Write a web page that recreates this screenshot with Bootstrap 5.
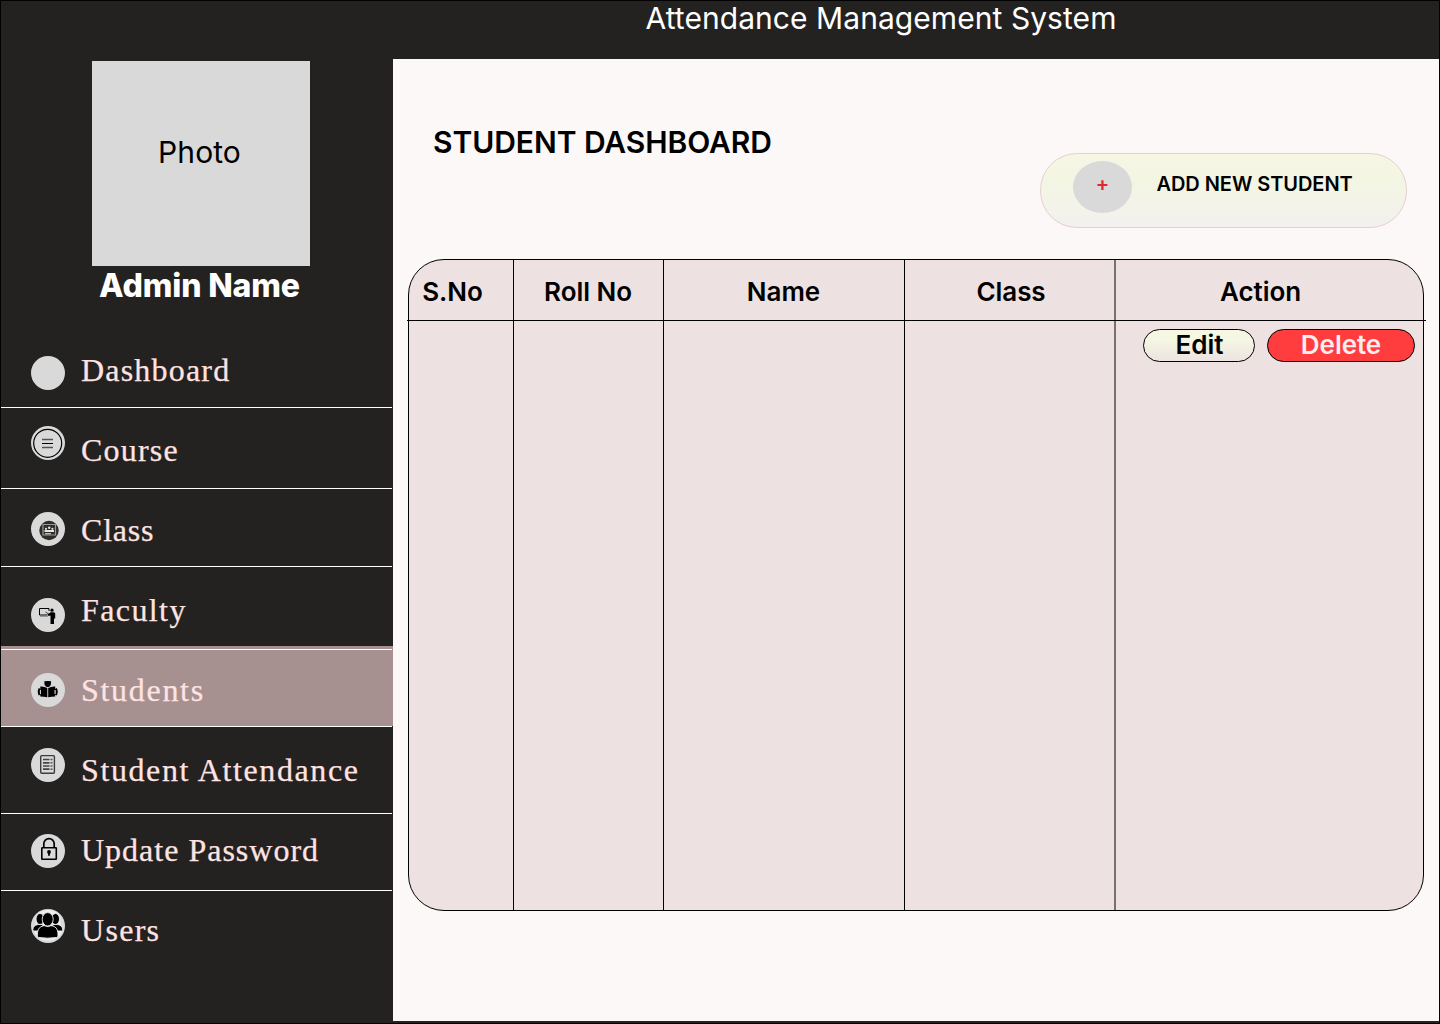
<!DOCTYPE html>
<html lang="en">
<head>
<meta charset="utf-8">
<meta name="viewport" content="width=device-width, initial-scale=1">
<title>Attendance Management System</title>
<link href="https://cdn.jsdelivr.net/npm/bootstrap@5.3.0/dist/css/bootstrap.min.css" rel="stylesheet">
<style>
  body { font-family: Inter, "Liberation Sans", sans-serif; color: #000; line-height: 1.2; }
  .app-frame { width: 1440px; height: 1024px; background: #232220; border: 1px solid #000; }
  .app-side { width: 392px; padding-top: 60px; }
  .app-photo { width: 218px; height: 205px; margin-left: 91px; background: #d9d9d9; font-size: 30px; padding: 0 3px 24px 0; letter-spacing: .1px; }
  .app-admin { width: 218px; margin-left: 90px; font-size: 32px; font-weight: 800; line-height: 40px; color: #fff; letter-spacing: -.15px; padding-right: 1px; }
  .side-menu { margin-top: 21px; }
  .side-link { height: var(--h); padding-left: 30px; gap: 16px; color: #ffe3e3; text-decoration: none; position: relative;
    font-family: "Liberation Serif", serif; font-size: 32px; line-height: 40px; letter-spacing: var(--ls, 1.2px); -webkit-text-stroke: .25px #ffe3e3; }
  .side-link::after { content: ""; position: absolute; left: 0; bottom: 0; width: 391px; height: 1px; background: #fff; }
  .side-link.no-line::after { display: none; }
  .side-link.current { background: linear-gradient(#a69190 80px, transparent 80px); }
  .side-link.current::before { content: ""; position: absolute; left: 0; top: 3px; width: 391px; height: 1px; background: #fff; }
  .side-link svg { width: 34px; height: 34px; margin-top: var(--i); flex: none; }
  .side-link span { margin-top: var(--t); white-space: nowrap; }
  .app-title { height: 58px; padding-right: 71px; font-size: 30px; font-weight: 400; line-height: 34px; letter-spacing: .06px; color: #fff; }
  .app-main { height: 962px; background: #fcf8f7; padding: 67px 16px 0 15px; }
  .page-head { height: 133px; padding: 0 17px 0 25px; }
  .page-title { font-size: 30px; font-weight: 600; line-height: 32px; letter-spacing: -.06px; margin: 0; }
  .add-btn { width: 367px; height: 75px; margin-top: 27px; padding: 0 0 7px 32px; border: 1px solid #e6cfcf; border-radius: 37px;
    background: linear-gradient(#f5f7e3, #f3f5e4 45%, #f3f1ed 90%); font-size: 20px; font-weight: 600; gap: 25px; color: #000; }
  .add-plus { width: 59px; height: 52px; border-radius: 50%; background: #d9d9d9; color: #dc2a2f; padding-bottom: 6px; }
  .add-label { padding-bottom: 7px; letter-spacing: -.06px; margin-left: -.5px; }
  .grid-box { width: 1016px; height: 652px; border: 1px solid #000; border-radius: 36px; background: #ede1e1; position: relative; }
  .grid-box::after { content: ""; position: absolute; left: -2px; top: 60px; width: 1019px; height: 1px; background: #000; }
  .grid-col { border-right: 1px solid #000; }
  .grid-col:last-child { border-right: 0; }
  .grid-head { height: 60px; padding-top: 4px; font-size: 26px; font-weight: 600; letter-spacing: -.05px; }
  .c-no { width: 105px; } .c-roll { width: 150px; } .c-name { width: 241px; }
  .c-class { width: 211px; border-right: 2px solid #777172; } .c-act { width: 307px; }
  .c-no .grid-head { padding-right: 17px; } .c-act .grid-head { padding-right: 18px; }
  .c-roll .grid-head, .c-name .grid-head { padding-right: 1px; } .c-class .grid-head { padding-left: 3px; }
  .row-btns { padding: 9px 0 0 27px; gap: 12px; }
  .pill-btn { height: 33px; border: 1px solid #000; border-radius: 17px; padding: 0; font-size: 26px; font-weight: 600; line-height: 28px; padding-bottom: 2px; letter-spacing: -.05px; }
  .edit-btn { width: 112px; background: linear-gradient(#f5f7e3 30%, #ede3e1); color: #000; padding-left: 1px; }
  .del-btn { width: 148px; background: #ff3d3f; color: #fceeee; }
</style>
<script src="https://cdn.jsdelivr.net/npm/bootstrap@5.3.0/dist/js/bootstrap.bundle.min.js"></script>
</head>
<body>
<div class="app-frame d-flex overflow-hidden">
  <aside class="app-side flex-shrink-0">
    <div class="app-photo d-flex align-items-center justify-content-center">Photo</div>
    <div class="app-admin text-center text-nowrap">Admin Name</div>
    <nav class="side-menu d-flex flex-column">
      <a href="#" class="side-link d-flex align-items-start" style="--h:81px;--i:29px;--t:23px;--ls:1.2px">
        <svg viewBox="0 0 34 34"><circle cx="17" cy="17" r="17" fill="#d9d9d9"/></svg><span>Dashboard</span></a>
      <a href="#" class="side-link d-flex align-items-start" style="--h:81px;--i:18px;--t:22px;--ls:1.2px">
        <svg viewBox="0 0 34 34"><circle cx="17" cy="17" r="17" fill="#d9d9d9"/><circle cx="16.700" cy="17.300" r="14" fill="none" stroke="#000" stroke-width="1.200"/><path d="M11 13.500h11M11 21.500h11" stroke="#555" stroke-width="1.300"/><path d="M11 17.500h11" stroke="#000"/></svg><span>Course</span></a>
      <a href="#" class="side-link d-flex align-items-start" style="--h:78px;--i:23px;--t:21px;--ls:.8px">
        <svg viewBox="0 0 34 34"><circle cx="17" cy="17" r="17" fill="#d9d9d9"/><circle cx="18" cy="18.500" r="9.700" fill="#2f2d29"/><path d="M12 12.500h12.500v10.500H12z" fill="none" stroke="#9b9a96" stroke-width="1.200"/><g fill="#e6e4e0"><circle cx="15" cy="16.800" r="1.100"/><circle cx="18.200" cy="15.800" r="1.200"/><circle cx="21.400" cy="16.800" r="1.100"/><path d="M13.500 18h9.500v2h-9.500zM14 21.300h6v1h-6z"/></g></svg><span>Class</span></a>
      <a href="#" class="side-link no-line d-flex align-items-start" style="--h:79px;--i:31px;--t:23px;--ls:1.4px">
        <svg viewBox="0 0 34 34"><circle cx="17" cy="17" r="17" fill="#d9d9d9"/><path d="M18 13V10.500H8.500v6.500h8" fill="none" stroke="#000"/><path d="M9 18.500h8" stroke="#888" stroke-width=".8"/><path d="M14.500 14l4 2.500" stroke="#333" stroke-width=".9"/><circle cx="21" cy="12.200" r="1.600"/><path d="M18 15.500l1.500-1.300h3.500l1.200 1.300v5h-1.200V26h-3.500v-8.500L17.500 18l-1-1.500z"/></svg><span>Faculty</span></a>
      <a href="#" class="side-link current d-flex align-items-start" style="--h:81px;--i:27px;--t:24px;--ls:1.7px">
        <svg viewBox="0 0 34 34"><circle cx="17" cy="17" r="17" fill="#d9d9d9"/><path d="M13.300 8.300q3.200-.8 6.800 0l-.3 3.600L17.900 14h-2.400L13.600 11.900z"/><path d="M9.300 13.500q4-.3 7 1.500V24.300Q12.500 23.500 9.300 23.500zM24.200 13.500q-4-.3-7 1.500V24.300Q20.500 23.500 24.200 23.500z"/><path d="M8.700 15.500q-1.700 3 0 6.500M24.800 15.500q1.700 3 0 6.500" fill="none" stroke="#000" stroke-width="2.200"/><path d="M9.400 17v4M24 17v4" stroke="#d9d9d9" stroke-width="1"/></svg><span>Students</span></a>
      <a href="#" class="side-link d-flex align-items-start" style="--h:87px;--i:21px;--t:23px;--ls:1.6px">
        <svg viewBox="0 0 34 34"><circle cx="17" cy="17" r="17" fill="#d9d9d9"/><rect x="9.700" y="7.600" width="13.700" height="17.700" rx="1" fill="none" stroke="#3c3c3c" stroke-width="1.400"/><path d="M12 11.500h6.500M12 14.800h6.500M12 18h6.500M12 21.200h6.500" stroke="#444" stroke-width="1.700"/><path d="M19.500 11.500h2M19.500 14.800h2M19.500 18h2M19.500 21.200h2" stroke="#555" stroke-width="1.600"/></svg><span>Student Attendance</span></a>
      <a href="#" class="side-link d-flex align-items-start" style="--h:77px;--i:20px;--t:16px;--ls:1px">
        <svg viewBox="0 0 34 34"><circle cx="17" cy="17" r="17" fill="#d9d9d9"/><rect x="10.800" y="13.700" width="14.500" height="11.600" rx=".5" fill="none" stroke="#000" stroke-width="1.600"/><path d="M12.800 13.500V9.800a5.200 5.200 0 0 1 10.400 0v3.700" fill="none" stroke="#000" stroke-width="1.700"/><circle cx="18" cy="18" r="1.900"/><path d="M17.100 18h1.800v3.700h-1.800z"/></svg><span>Update Password</span></a>
      <a href="#" class="side-link no-line d-flex align-items-start" style="--h:81px;--i:18px;--t:19px;--ls:1.3px">
        <svg viewBox="0 0 34 34"><circle cx="17" cy="17" r="17" fill="#d9d9d9"/><path d="M5 6.500a16 16 0 0 1 24 0l1.500 18a16 16 0 0 1-26.500 0z" fill="#efefef"/><g stroke="#efefef" stroke-width=".9"><ellipse cx="9" cy="10" rx="4" ry="5.500"/><ellipse cx="24.500" cy="10" rx="4" ry="5.500"/><path d="M1.800 20.800q.3-4.500 5-5.300h5v6.500H3q-1.300 0-1.200-1.200zM31.700 20.800q-.3-4.500-5-5.300h-5v6.500h8.800q1.300 0 1.200-1.200z"/><path d="M6.300 27q-.2-7.500 3.700-9.300 2-1 3.500-1 3.200 1.500 6.500 0 1.500 0 3.500 1Q27.300 19.500 27 27q0 1.200-1.500 1.500-9 1.300-17.700 0Q6.300 28.200 6.300 27z"/><ellipse cx="16.700" cy="10.300" rx="5.500" ry="6.700"/></g></svg><span>Users</span></a>
    </nav>
  </aside>
  <div class="flex-grow-1">
    <header class="app-title text-center">Attendance Management System</header>
    <main class="app-main">
      <div class="page-head d-flex justify-content-between align-items-start">
        <h1 class="page-title">STUDENT DASHBOARD</h1>
        <button type="button" class="add-btn btn d-flex align-items-center">
          <span class="add-plus d-flex align-items-center justify-content-center">+</span><span class="add-label">ADD NEW STUDENT</span>
        </button>
      </div>
      <section class="grid-box d-flex">
        <div class="grid-col c-no"><div class="grid-head d-flex align-items-center justify-content-center">S.No</div></div>
        <div class="grid-col c-roll"><div class="grid-head d-flex align-items-center justify-content-center">Roll No</div></div>
        <div class="grid-col c-name"><div class="grid-head d-flex align-items-center justify-content-center">Name</div></div>
        <div class="grid-col c-class"><div class="grid-head d-flex align-items-center justify-content-center">Class</div></div>
        <div class="grid-col c-act"><div class="grid-head d-flex align-items-center justify-content-center">Action</div>
          <div class="row-btns d-flex">
            <button type="button" class="pill-btn edit-btn btn">Edit</button>
            <button type="button" class="pill-btn del-btn btn">Delete</button>
          </div>
        </div>
      </section>
    </main>
  </div>
</div>
</body>
</html>
